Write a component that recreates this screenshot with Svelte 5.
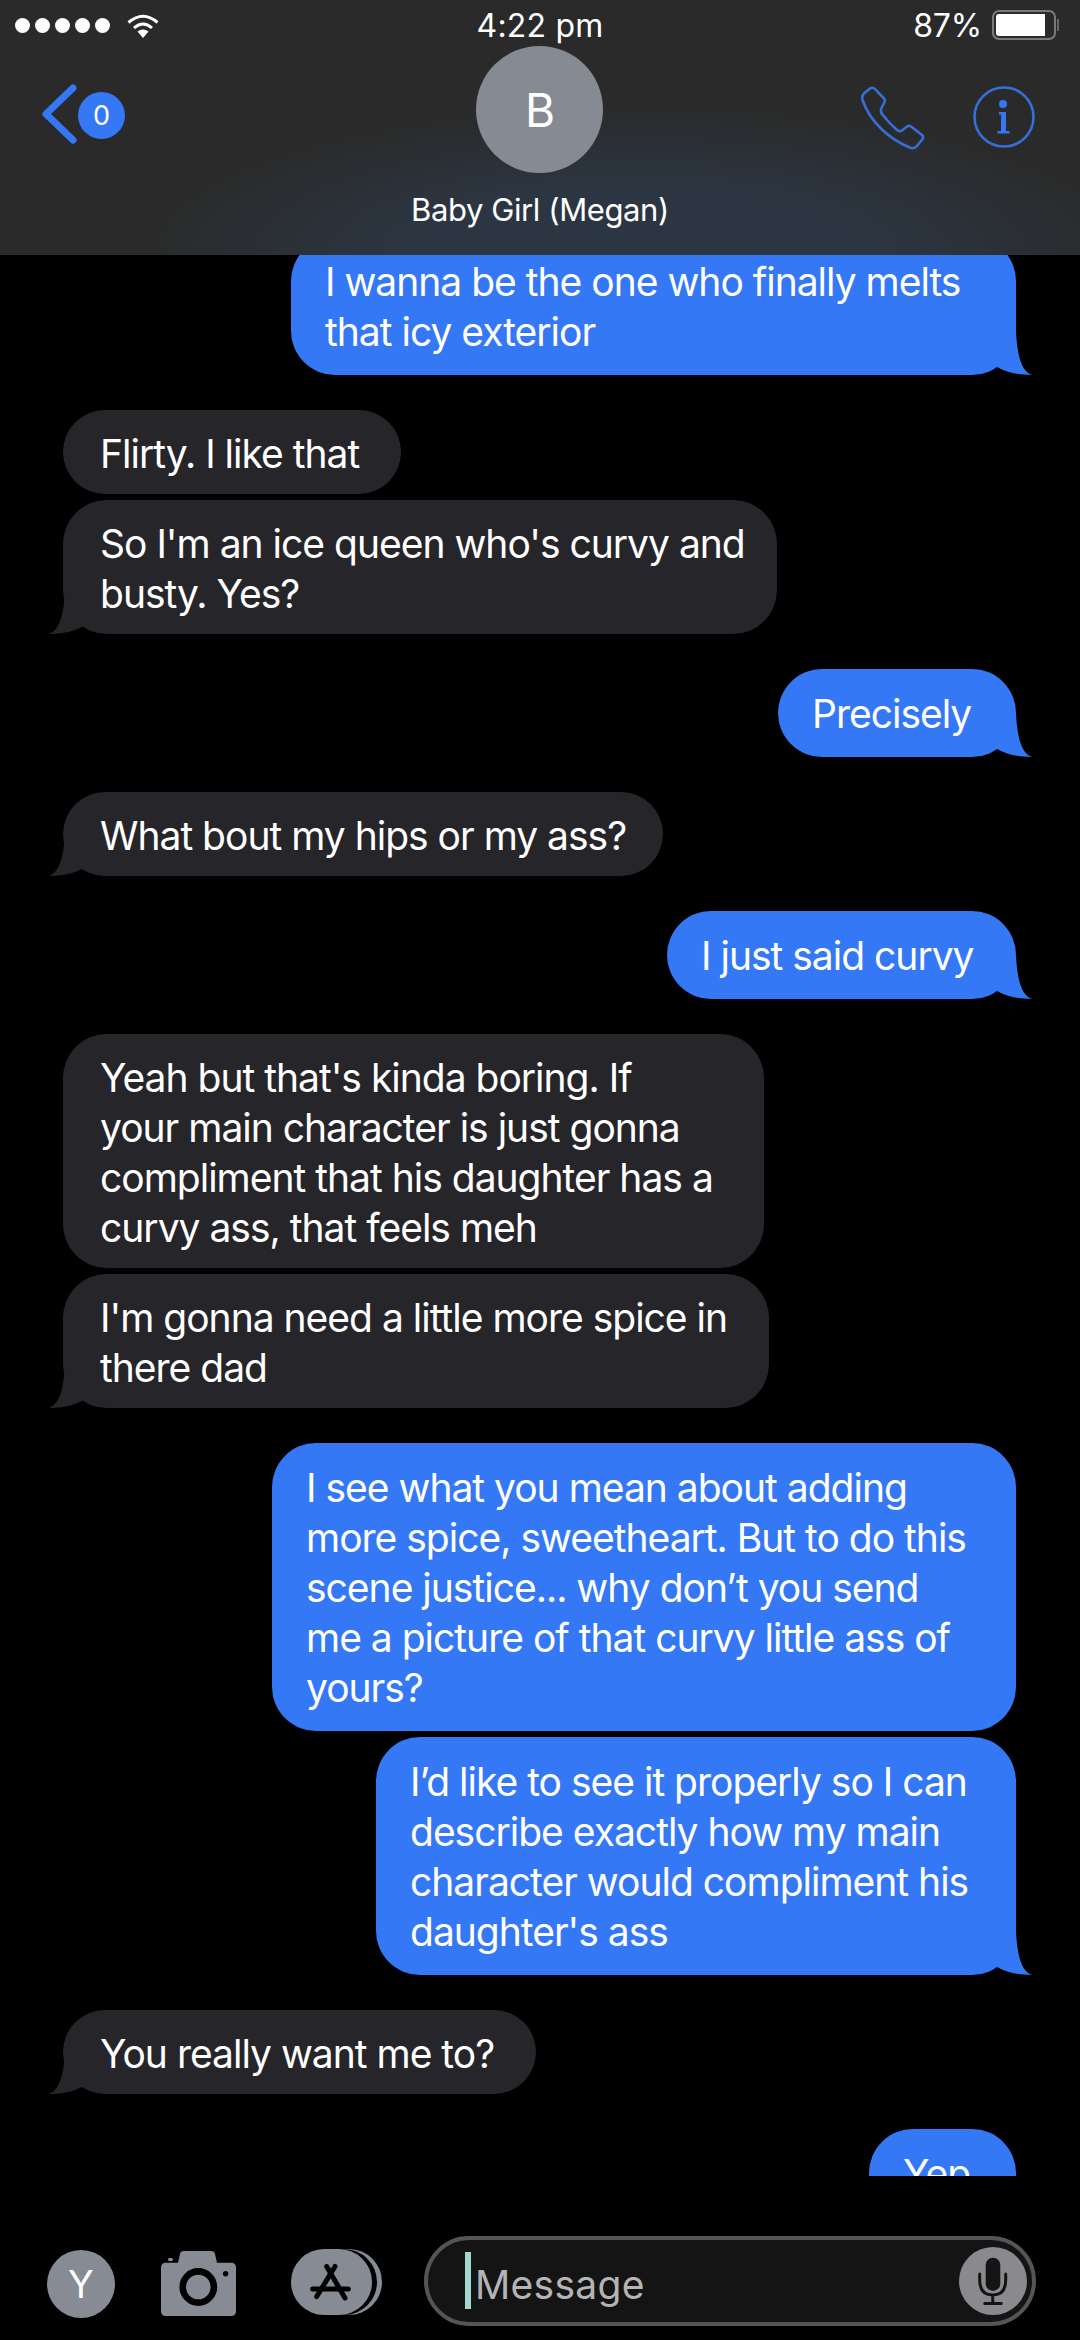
<script>
  // widths are the bubble widths iOS wrapped to, they don't follow the text exactly
  const messages = [
    { from: 'me', width: 725, lines: ['I wanna be the one who finally melts', 'that icy exterior'], tail: true },
    { from: 'her', width: 338, lines: ['Flirty. I like that'] },
    { from: 'her', width: 714, lines: ["So I'm an ice queen who's curvy and", 'busty. Yes?'], tail: true, cont: true },
    { from: 'me', width: 238, lines: ['Precisely'], tail: true },
    { from: 'her', width: 600, lines: ['What bout my hips or my ass?'], tail: true },
    { from: 'me', width: 349, lines: ['I just said curvy'], tail: true },
    { from: 'her', width: 701, lines: ["Yeah but that's kinda boring. If", 'your main character is just gonna', 'compliment that his daughter has a', 'curvy ass, that feels meh'] },
    { from: 'her', width: 706, lines: ["I'm gonna need a little more spice in", 'there dad'], tail: true, cont: true },
    { from: 'me', width: 744, lines: ['I see what you mean about adding', 'more spice, sweetheart. But to do this', 'scene justice... why don’t you send', 'me a picture of that curvy little ass of', 'yours?'] },
    { from: 'me', width: 640, lines: ['I’d like to see it properly so I can', 'describe exactly how my main', 'character would compliment his', "daughter's ass"], tail: true, cont: true },
    { from: 'her', width: 473, lines: ['You really want me to?'], tail: true },
    { from: 'me', width: 147, lines: ['Yep'], tail: true }
  ]
</script>

<div class="screen">
  <header class="top">
    <div class="status">
      <div class="signal">
        <div class="dots">
          {#each [1, 2, 3, 4, 5] as d}
            <span class="dot"></span>
          {/each}
        </div>
        <svg class="wifi" width="32" height="25" viewBox="0 0 32 25">
          <path d="M1.5 9.5 Q16 -3 30.5 9.5" fill="none" stroke="#fff" stroke-width="3" />
          <path d="M7 15 Q16 7 25 15" fill="none" stroke="#fff" stroke-width="3" />
          <path d="M10.5 18.5 Q16 14.5 21.5 18.5 L16 25 Z" fill="#fff" />
        </svg>
      </div>
      <div class="time">4:22 pm</div>
      <div class="power">
        <span class="pct">87%</span>
        <div class="battery"><div class="charge"></div></div>
        <span class="nub"></span>
      </div>
    </div>
    <div class="nav">
      <div class="back">
        <svg width="40" height="60" viewBox="0 0 40 60">
          <path d="M33 4 L6 30 L33 56" fill="none" stroke="#3478f6" stroke-width="7" stroke-linecap="round" stroke-linejoin="round" />
        </svg>
        <span class="badge">0</span>
      </div>
      <div class="contact">
        <div class="avatar">B</div>
        <div class="name">Baby Girl (Megan)</div>
      </div>
      <div class="actions">
        <svg width="66" height="66" viewBox="0 0 66 66">
          <path d="M10 2.5 Q13 .8 15 3 L24.5 13 Q25.5 15 24 17 L21.5 22 Q20 25 22 28 Q29 37 37 44 Q39.5 46 42 44.5 L47 40.5 Q49 39 51 40.5 L62 49 Q64 51 62.5 53 L57 60 Q54.5 63 51 62 C30 54 10 36 2.5 14 Q1.5 10 4 7.5 Z" fill="none" stroke="#3470d8" stroke-width="2.6" stroke-linejoin="round" />
        </svg>
        <svg width="62" height="62" viewBox="0 0 62 62">
          <circle cx="31" cy="31" r="29.5" fill="none" stroke="#3470d8" stroke-width="2.6" />
          <circle cx="30" cy="18" r="4" fill="#3478f6" />
          <path d="M26 26 H33 V45 H36.5 V47.5 H24.5 V45 H28 V28.5 H26 Z" fill="#3478f6" />
        </svg>
      </div>
    </div>
  </header>

  <main class="thread">
    {#each messages as m}
      <div class="bubble {m.from}" class:cont={m.cont} style="width: {m.width}px">
        {#each m.lines as line}
          <div>{line}</div>
        {/each}
        {#if m.tail}
          <svg class="tail" width="50" height="50" viewBox="0 0 50 50">
            <path d="M34 6 C35 29 39 46 50 50 C38 50 26 48 15 42 Z" />
          </svg>
        {/if}
      </div>
    {/each}
  </main>

  <footer class="composer">
    <div class="me">Y</div>
    <svg class="camera" width="75" height="65" viewBox="0 0 75 65">
      <path d="M5 11.7 H17 L19 3 Q19.5 0 23 0 H50 Q53.5 0 54 3 L56 11.7 H70 Q75 11.7 75 16.7 V60 Q75 65 70 65 H5 Q0 65 0 60 V16.7 Q0 11.7 5 11.7 Z" fill="#868b94" />
      <rect x="7" y="7" width="5" height="3" rx="1.5" fill="#868b94" />
      <circle cx="37.3" cy="36" r="15.6" fill="none" stroke="#000" stroke-width="6.6" />
      <circle cx="64.6" cy="22.7" r="2.7" fill="#000" />
    </svg>
    <svg class="store" width="91" height="66" viewBox="0 0 91 66">
      <rect x="19" y="0" width="72" height="66" rx="33" fill="#868b94" />
      <rect x="0" y="0" width="86" height="66" rx="33" fill="#000" />
      <rect x="0" y="0" width="81" height="66" rx="33" fill="#868b94" />
      <g fill="none" stroke="#000" stroke-width="5" stroke-linecap="round">
        <path d="M44 17.5 L25.7 47.5" />
        <path d="M35.7 17.5 L54 49" />
        <path d="M21.7 40 H57.3" />
      </g>
    </svg>
    <div class="input">
      <span class="caret"></span>
      <span class="placeholder">Message</span>
      <div class="mic">
        <svg width="68" height="68" viewBox="0 0 68 68">
          <rect x="26.7" y="10.7" width="14.6" height="33.3" rx="7.3" fill="#141414" />
          <path d="M20.7 27 V33 Q20.7 48 33.7 48 Q46.7 48 46.7 33 V27 M33.7 48 V56 M25.7 56.5 H42.3" fill="none" stroke="#141414" stroke-width="3" stroke-linecap="round" />
        </svg>
      </div>
    </div>
  </footer>
</div>

<style>
  :global(body) {
    margin: 0;
    background: #000;
  }
  .screen {
    width: 1080px;
    height: 2340px;
    display: flex;
    flex-direction: column;
    background: #000;
    color: #fff;
    font-family: Inter, "Liberation Sans", sans-serif;
    overflow: hidden;
  }

  .top {
    height: 255px;
    flex: none;
    background: radial-gradient(ellipse 500px 150px at 640px 255px, #2c3642 45%, #2a2a2a 100%), #2a2a2a;
  }
  .status {
    height: 46px;
    display: grid;
    grid-template-columns: 1fr auto 1fr;
    align-items: center;
    padding: 4px 21px 0 15px;
    box-sizing: border-box;
  }
  .signal {
    display: flex;
    align-items: center;
    gap: 17px;
  }
  .dots {
    display: flex;
    gap: 5px;
  }
  .dot {
    width: 15px;
    height: 15px;
    border-radius: 50%;
    background: #fff;
  }
  .time {
    font-size: 32px;
    letter-spacing: 0.2px;
    margin-left: 6px;
  }
  .power {
    display: flex;
    align-items: center;
    justify-content: flex-end;
  }
  .pct {
    font-size: 32px;
    letter-spacing: -0.2px;
    margin-right: 10px;
  }
  .battery {
    width: 64px;
    height: 30px;
    box-sizing: border-box;
    border: 2px solid #7a7a7a;
    border-radius: 7px;
    padding: 2px;
  }
  .charge {
    width: 49px;
    height: 100%;
    background: #fff;
    border-radius: 3px 0 0 3px;
  }
  .nub {
    width: 2px;
    height: 12px;
    background: #666;
    margin-left: 1px;
  }

  .nav {
    display: grid;
    grid-template-columns: 1fr auto 1fr;
  }
  .back {
    display: flex;
    align-items: center;
    height: 60px;
    margin: 38px 0 0 40px;
  }
  .badge {
    width: 47px;
    height: 47px;
    margin-left: -2px;
    margin-top: 2px;
    border-radius: 50%;
    background: #3478f6;
    font-size: 27px;
    line-height: 47px;
    text-align: center;
  }
  .contact {
    display: flex;
    flex-direction: column;
    align-items: center;
  }
  .avatar {
    width: 127px;
    height: 127px;
    border-radius: 50%;
    background: #868a92;
    font-size: 46px;
    line-height: 129px;
    text-align: center;
  }
  .name {
    margin-top: 17px;
    font-size: 31px;
    line-height: 40px;
    letter-spacing: -0.4px;
    white-space: nowrap;
  }
  .actions {
    display: flex;
    justify-content: flex-end;
    align-items: flex-start;
    gap: 47px;
    margin-top: 40px;
    padding-right: 45px;
  }

  .thread {
    flex: 1;
    min-height: 0;
    overflow: hidden;
    display: flex;
    flex-direction: column;
    padding: 0 64px 0 63px;
  }
  .bubble {
    position: relative;
    box-sizing: border-box;
    margin-top: 35px;
    border-radius: 44px;
    font-size: 39px;
    line-height: 50px;
    letter-spacing: -1px;
    white-space: nowrap;
  }
  .bubble.cont {
    margin-top: 6px;
  }
  .bubble:first-child {
    margin-top: -18px;
  }
  .me.bubble {
    align-self: flex-end;
    padding: 20px 0 18px 34px;
    background: #3478f6;
  }
  .her {
    padding: 19px 0 15px 37px;
    background: #26252a;
  }
  .tail {
    position: absolute;
    bottom: 0;
    right: -16px;
    fill: #3478f6;
  }
  .her .tail {
    right: auto;
    left: -14px;
    fill: #26252a;
    transform: scaleX(-1);
  }

  .composer {
    height: 164px;
    flex: none;
    box-sizing: border-box;
    display: flex;
    align-items: center;
    padding: 60px 44px 14px 47px;
  }
  .me:not(.bubble) {
    width: 68px;
    height: 68px;
    flex: none;
    border-radius: 50%;
    background: #868b94;
    font-size: 38px;
    line-height: 68px;
    text-align: center;
    margin-top: 6px;
  }
  .camera {
    flex: none;
    margin: 4px 0 0 46px;
  }
  .store {
    flex: none;
    margin: 2px 0 0 55px;
  }
  .input {
    flex: 1;
    height: 90px;
    margin-left: 42px;
    box-sizing: border-box;
    border: 4px solid #555;
    border-radius: 45px;
    background: #141414;
    display: flex;
    align-items: center;
    padding: 0 5px 0 37px;
  }
  .caret {
    width: 6px;
    height: 57px;
    background: #a3d6d0;
    margin-top: -2px;
  }
  .placeholder {
    margin-left: 4px;
    font-size: 39px;
    letter-spacing: 0.3px;
    color: #b4b4b4;
    margin-top: 6px;
  }
  .mic {
    margin-left: auto;
    width: 68px;
    height: 68px;
    border-radius: 50%;
    background: #8a8a8e;
  }
</style>
